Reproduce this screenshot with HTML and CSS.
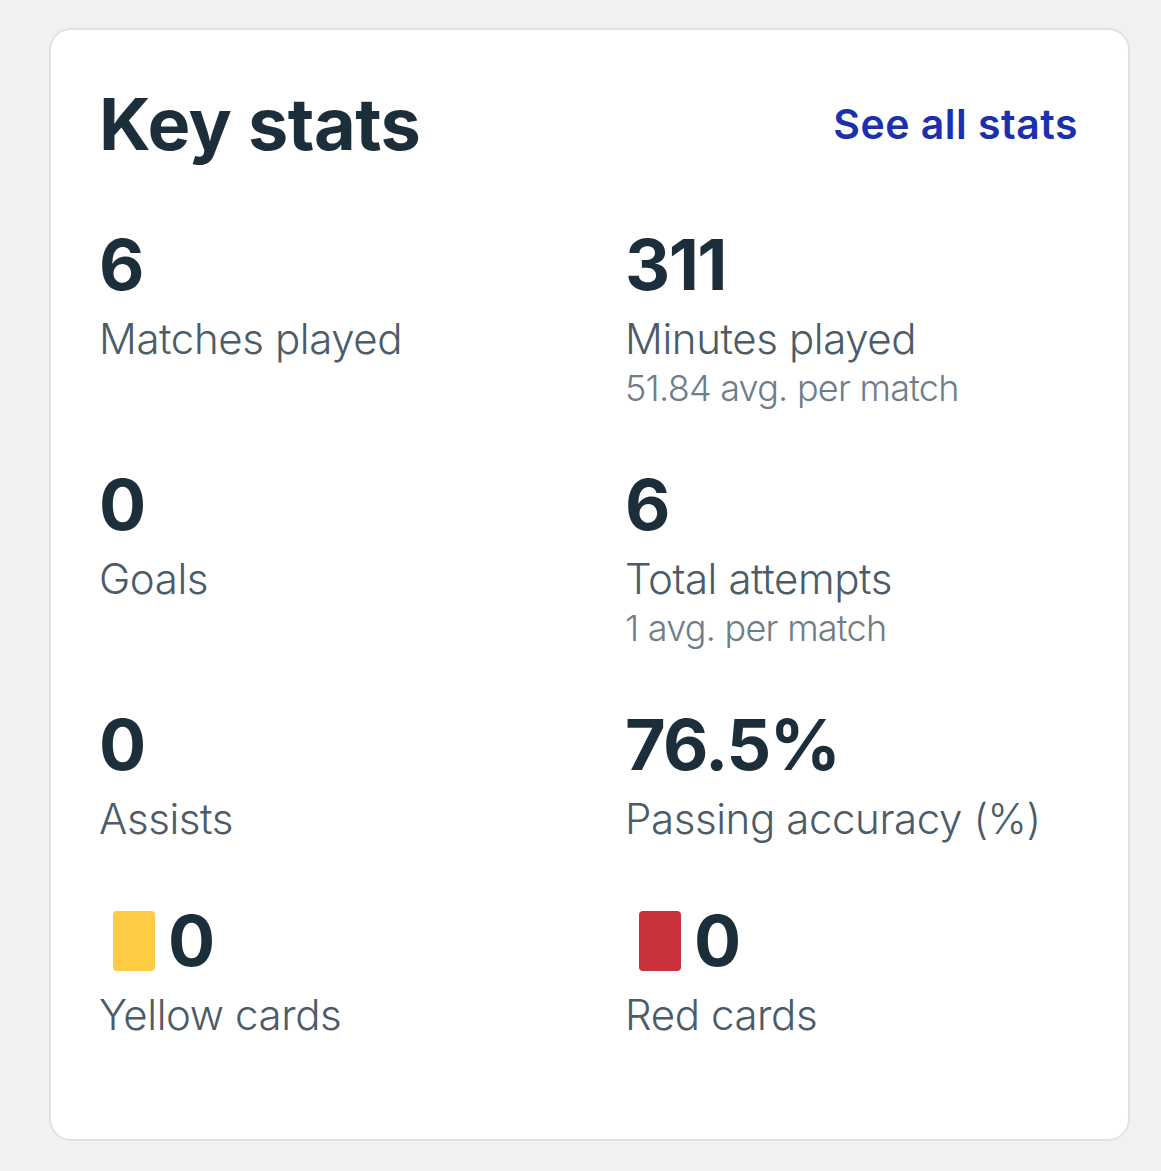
FILE: index.html
```html
<!DOCTYPE html>
<html lang="en">
<head>
<meta charset="utf-8">
<title>Key stats</title>
<link rel="stylesheet" href="styles.css">
</head>
<body>
<section class="card">
  <header class="card-head">
    <h2 class="title">Key stats</h2>
    <a class="link" href="#">See all stats</a>
  </header>
  <div class="grid">
    <div class="stat">
      <div class="value">6</div>
      <div class="label">Matches played</div>
    </div>
    <div class="stat">
      <div class="value">311</div>
      <div class="label">Minutes played</div>
      <div class="sub">51.84 avg. per match</div>
    </div>
    <div class="stat">
      <div class="value">0</div>
      <div class="label">Goals</div>
    </div>
    <div class="stat">
      <div class="value">6</div>
      <div class="label">Total attempts</div>
      <div class="sub">1 avg. per match</div>
    </div>
    <div class="stat">
      <div class="value">0</div>
      <div class="label">Assists</div>
    </div>
    <div class="stat">
      <div class="value">76.5%</div>
      <div class="label">Passing accuracy (%)</div>
    </div>
    <div class="stat">
      <div class="value value-row">
        <svg class="card-icon" width="72" height="72" viewBox="0 0 72 72" aria-hidden="true"><rect x="17" y="6" width="42" height="60" rx="4" fill="#fdcc44"/></svg>
        <span>0</span>
      </div>
      <div class="label">Yellow cards</div>
    </div>
    <div class="stat">
      <div class="value value-row">
        <svg class="card-icon" width="72" height="72" viewBox="0 0 72 72" aria-hidden="true"><rect x="17" y="6" width="42" height="60" rx="4" fill="#c9313b"/></svg>
        <span>0</span>
      </div>
      <div class="label">Red cards</div>
    </div>
  </div>
</section>
</body>
</html>
```

FILE: styles.css
```css
html, body {
  margin: 0;
  padding: 0;
}
body {
  background: #f2f1f0;
  font-family: Inter, "Noto Sans", "Liberation Sans", sans-serif;
  padding: 28px 31px 0 49px;
  min-height: 1171px;
  box-sizing: border-box;
}
.card {
  width: 1081px;
  box-sizing: border-box;
  background: #ffffff;
  border: 2px solid #e1e1e1;
  border-radius: 22px;
  padding: 58px 50px 99px 48px;
}
.card-head {
  display: flex;
  justify-content: space-between;
  align-items: center;
}
.title {
  margin: 0;
  font-size: 72px;
  line-height: 72px;
  font-weight: 700;
  color: #1c2e3a;
  letter-spacing: -0.5px;
}
.link {
  font-size: 41px;
  line-height: 48px;
  font-weight: 600;
  color: #1b30ad;
  text-decoration: none;
  letter-spacing: 0.5px;
}
.grid {
  margin-top: 69px;
  display: grid;
  grid-template-columns: 1fr 1fr;
  column-gap: 73px;
  row-gap: 61px;
}
.value {
  font-size: 70px;
  line-height: 72px;
  font-weight: 700;
  color: #1c2e3a;
  letter-spacing: -1.5px;
}
.value-row {
  display: flex;
  align-items: center;
  margin-left: -3px;
  letter-spacing: 0;
}
.card-icon {
  display: block;
  flex: none;
}
.label {
  margin-top: 13px;
  font-size: 42px;
  line-height: 50px;
  font-weight: 350;
  color: #4b5c68;
  letter-spacing: -0.4px;
}
.sub {
  margin-top: 5px;
  font-size: 36px;
  line-height: 39px;
  font-weight: 350;
  color: #6e7d88;
  letter-spacing: -0.75px;
}
```
